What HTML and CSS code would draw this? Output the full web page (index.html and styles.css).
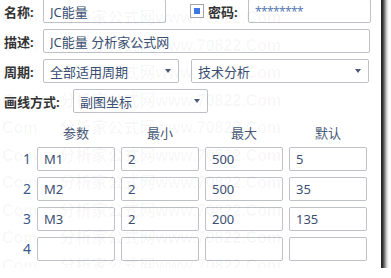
FILE: index.html
```html
<!DOCTYPE html>
<html lang="zh-CN">
<head>
    <meta charset="UTF-8">
    <title>公式参数</title>
    <link rel="stylesheet" href="styles.css">
</head>
<body>
    <div class="window">
        <div class="form">
            <div class="row">
                <label class="lbl" for="name">名称:</label>
                <input class="field f-name" id="name" type="text" value="JC能量">
                <span class="check"><span class="check-mark"></span></span>
                <label class="lbl lbl-pass" for="pass">密码:</label>
                <input class="field f-pass" id="pass" type="text" value="********">
            </div>
            <div class="row">
                <label class="lbl" for="desc">描述:</label>
                <input class="field f-desc" id="desc" type="text" value="JC能量 分析家公式网">
            </div>
            <div class="row">
                <label class="lbl">周期:</label>
                <div class="select s-period">全部适用周期<span class="arrow"></span></div>
                <div class="select s-type">技术分析<span class="arrow"></span></div>
            </div>
            <div class="row">
                <label class="lbl lbl-wide">画线方式:</label>
                <div class="select s-draw">副图坐标<span class="arrow"></span></div>
            </div>
        </div>

        <!-- parameter table -->
        <div class="params">
            <span></span>
            <span class="head">参数</span>
            <span class="head">最小</span>
            <span class="head">最大</span>
            <span class="head">默认</span>

            <span class="num">1</span>
            <input class="cell" type="text" value="M1">
            <input class="cell" type="text" value="2">
            <input class="cell" type="text" value="500">
            <input class="cell" type="text" value="5">

            <span class="num">2</span>
            <input class="cell" type="text" value="M2">
            <input class="cell" type="text" value="2">
            <input class="cell" type="text" value="500">
            <input class="cell" type="text" value="35">

            <span class="num">3</span>
            <input class="cell" type="text" value="M3">
            <input class="cell" type="text" value="2">
            <input class="cell" type="text" value="200">
            <input class="cell" type="text" value="135">

            <span class="num">4</span>
            <input class="cell" type="text" value="">
            <input class="cell" type="text" value="">
            <input class="cell" type="text" value="">
            <input class="cell" type="text" value="">
        </div>

        <div class="watermark">
            <div class="wm-line"><span>Com</span><span>分析家公式网www.70822.Com</span></div>
            <div class="wm-line"><span>Com</span><span>分析家公式网www.70822.Com</span></div>
            <div class="wm-line"><span>Com</span><span>分析家公式网www.70822.Com</span></div>
            <div class="wm-line"><span>Com</span><span>分析家公式网www.70822.Com</span></div>
            <div class="wm-line"><span>Com</span><span>分析家公式网www.70822.Com</span></div>
            <div class="wm-line"><span>Com</span><span>分析家公式网www.70822.Com</span></div>
            <div class="wm-line"><span>Com</span><span>分析家公式网www.70822.Com</span></div>
            <div class="wm-line"><span>Com</span><span>分析家公式网www.70822.Com</span></div>
            <div class="wm-line"><span>Com</span><span>分析家公式网www.70822.Com</span></div>
            <div class="wm-line"><span>Com</span><span>分析家公式网www.70822.Com</span></div>
        </div>
    </div>
</body>
</html>
```

FILE: styles.css
```css
/* Page */
html, body {
    margin: 0;
    padding: 0;
    background: #fff;
}
body {
    font-family: "Noto Sans", "Noto Sans CJK SC", sans-serif;
    font-size: 13px;
    color: #3b4f72;
    overflow: hidden;
}

/* Dialog window, its top-left corner sits outside the shot */
.window {
    position: relative;
    box-sizing: border-box;
    width: 391px;
    height: 278px;
    margin: -10px 0 0 -10px;
    padding: 9px 0 0 14px;
    background: #fff;
    box-shadow: 4px 4px 4px #1c1c1c;
    overflow: hidden;
}

/* Form rows */
.row {
    display: flex;
    align-items: center;
    height: 24px;
    margin-bottom: 6px;
}
.lbl {
    width: 39px;
    flex: none;
    font-weight: bold;
    color: #333;
    white-space: nowrap;
}
.lbl-wide {
    width: 69px;
}
.lbl-pass {
    width: 40px;
    margin-left: 4px;
}

.field, .select, .cell {
    box-sizing: border-box;
    height: 24px;
    border: 1px solid #bfc1c8;
    border-radius: 2px;
    background: #fff;
    font-family: inherit;
    font-size: 13px;
    color: #3b4f72;
    padding: 0 6px;
    margin: 0;
    outline: none;
}
.f-name { width: 123px; }
.f-pass {
    width: 123px;
    font-size: 12px;
    letter-spacing: -0.6px;
    color: #5a7cb5;
}
.f-desc { width: 327px; }

.check {
    box-sizing: border-box;
    width: 14px;
    height: 14px;
    margin-left: 24px;
    border: 1px solid #a4a6ae;
    background: #fff;
    display: flex;
    align-items: center;
    justify-content: center;
}
.check-mark {
    width: 6px;
    height: 6px;
    background: #3e78e4;
}

/* Drop-down boxes */
.select {
    display: flex;
    align-items: center;
    justify-content: space-between;
    padding: 0 7px 0 6px;
    white-space: nowrap;
}
.s-period { width: 136px; }
.s-type { width: 178px; margin-left: 12px; }
.s-draw { width: 135px; }
.arrow {
    width: 0;
    height: 0;
    border-left: 3.5px solid transparent;
    border-right: 3.5px solid transparent;
    border-top: 4px solid #4c5c78;
}

/* Parameter table */
.params {
    display: grid;
    grid-template-columns: 27px repeat(4, 78px);
    grid-template-rows: 22px repeat(4, 24px);
    column-gap: 6px;
    row-gap: 6px;
}
.head {
    align-self: end;
    line-height: 16px;
    text-align: center;
    color: #4a5a78;
}
.num {
    text-align: right;
    line-height: 24px;
    font-size: 14px;
    color: #3c5a8a;
}
.cell {
    width: 78px;
}

/* Faint site watermark over the whole dialog */
.watermark {
    position: absolute;
    top: 14px;
    left: 12px;
    pointer-events: none;
    font-family: "Liberation Sans", "Noto Sans CJK SC", sans-serif;
    font-size: 16px;
    font-weight: bold;
    line-height: 27.5px;
    color: rgba(0, 0, 0, 0.035);
    white-space: nowrap;
}
.wm-line {
    display: flex;
    gap: 22px;
}
```
